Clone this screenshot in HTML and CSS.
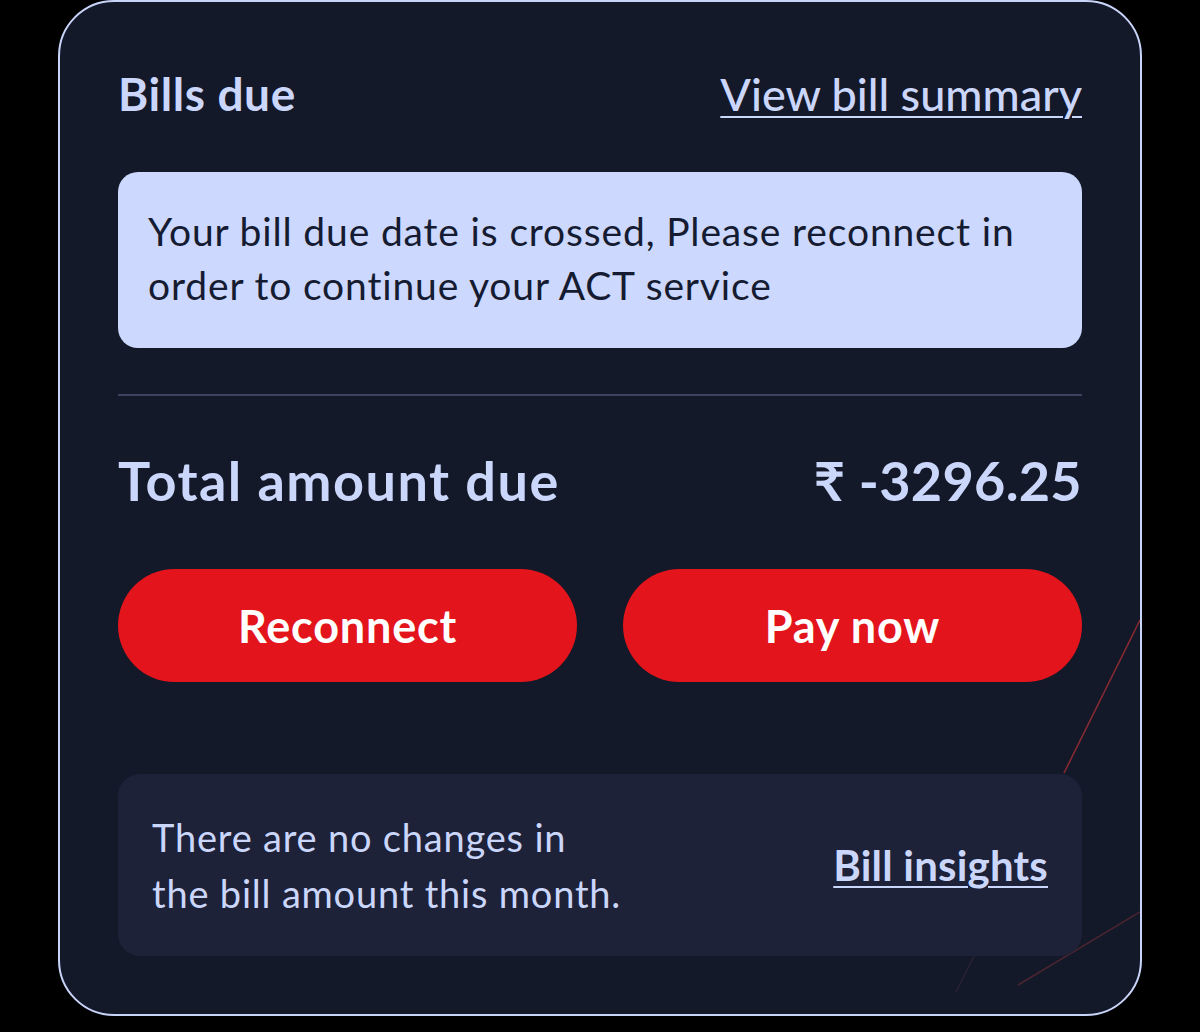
FILE: index.html
```html
<!DOCTYPE html>
<html lang="en">
<head>
<meta charset="utf-8">
<title>Bills due</title>
<link rel="stylesheet" href="styles.css">
</head>
<body>
<div class="card">
  <svg class="deco" width="1084" height="1016" viewBox="0 0 1084 1016" aria-hidden="true">
    <line x1="1082" y1="620" x2="1006" y2="773" stroke="#8a2a33" stroke-width="1.5" />
    <line x1="1082" y1="912" x2="960" y2="985" stroke="#4a2530" stroke-width="1.5" />
    <line x1="916" y1="956" x2="898" y2="992" stroke="#2a2534" stroke-width="1.5" />
  </svg>
  <div class="header">
    <h2 class="title">Bills due</h2>
    <a class="link link-lg" href="#">View bill summary</a>
  </div>
  <div class="alert">Your bill due date is crossed, Please reconnect in order to continue your ACT service</div>
  <hr class="divider">
  <div class="total-row">
    <span class="total-label">Total amount due</span>
    <span class="total-value">₹ -3296.25</span>
  </div>
  <div class="actions">
    <button class="btn">Reconnect</button>
    <button class="btn">Pay now</button>
  </div>
  <div class="insights">
    <p class="insights-text">There are no changes in<br>the bill amount this month.</p>
    <a class="link link-md" href="#">Bill insights</a>
  </div>
</div>
</body>
</html>
```

FILE: styles.css
```css
html, body {
  margin: 0;
  padding: 0;
  background: #000;
}
body {
  width: 1200px;
  height: 1032px;
  overflow: hidden;
  font-family: "Lato", "Noto Sans", sans-serif;
}
.card {
  position: relative;
  box-sizing: border-box;
  margin-left: 58px;
  width: 1084px;
  height: 1016px;
  border: 2px solid #c8d4f8;
  border-radius: 56px;
  background: #141929;
  padding: 63px 58px 0 58px;
  display: flex;
  flex-direction: column;
  overflow: hidden;
}
.deco {
  position: absolute;
  left: -2px;
  top: -2px;
  pointer-events: none;
}
.header {
  position: relative;
  display: flex;
  justify-content: space-between;
  align-items: center;
  height: 57px;
}
.title {
  margin: 0;
  font-size: 46px;
  font-weight: 700;
  color: #cbd6fb;
  letter-spacing: 0.6px;
}
.link {
  color: #cbd6fb;
  text-decoration: underline;
  text-decoration-thickness: 2px;
  text-underline-offset: 5px;
}
.link-lg {
  font-size: 45px;
  font-weight: 500;
  letter-spacing: 0;
}
.alert {
  position: relative;
  margin-top: 50px;
  background: #ccd8fe;
  border-radius: 20px;
  padding: 32px 30px 36px 30px;
  font-size: 39px;
  line-height: 54px;
  color: #151b30;
  letter-spacing: 0.85px;
}
.divider {
  margin: 46px 0 0 0;
  border: 0;
  height: 2px;
  background: #3b4361;
}
.total-row {
  position: relative;
  margin-top: 52px;
  display: flex;
  justify-content: space-between;
  align-items: center;
  height: 65px;
  font-size: 54px;
  font-weight: 700;
  color: #cbd6fb;
}
.total-label {
  letter-spacing: 1.5px;
}
.total-value {
  letter-spacing: 0.3px;
}
.actions {
  position: relative;
  margin-top: 56px;
  display: flex;
  gap: 46px;
}
.btn {
  flex: 1;
  height: 113px;
  border: 0;
  border-radius: 57px;
  background: #e3141b;
  color: #fff;
  font-family: inherit;
  font-size: 45px;
  font-weight: 700;
  letter-spacing: 0.8px;
}
.insights {
  position: relative;
  margin-top: 92px;
  height: 182px;
  box-sizing: border-box;
  background: #1d2239;
  border-radius: 22px;
  padding: 0 34px;
  display: flex;
  justify-content: space-between;
  align-items: center;
}
.insights-text {
  margin: 0;
  font-size: 38px;
  line-height: 56px;
  color: #cbd6fb;
  letter-spacing: 0.8px;
}
.link-md {
  font-size: 42px;
  font-weight: 700;
  letter-spacing: 0.2px;
}
```
